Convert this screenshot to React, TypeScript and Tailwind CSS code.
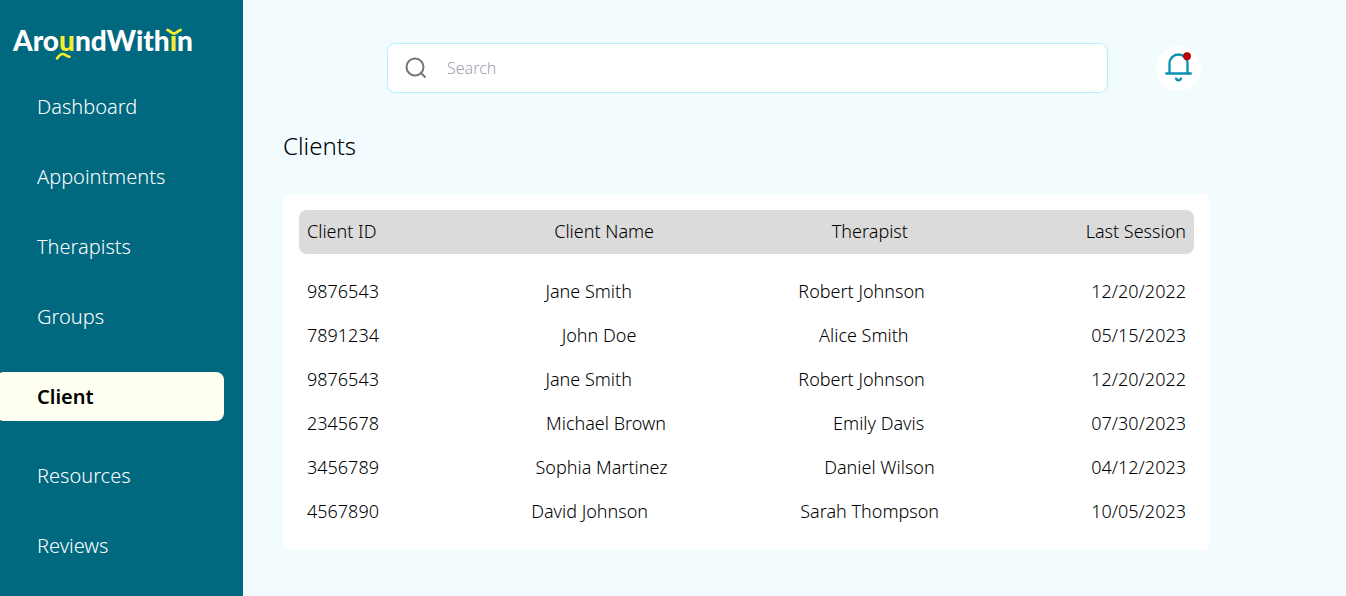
const navItems = ['Dashboard', 'Appointments', 'Therapists', 'Groups', 'Client', 'Resources', 'Reviews'];

const columns = ['Client ID', 'Client Name', 'Therapist', 'Last Session'];

const clients = [
  ['9876543', 'Jane Smith', 'Robert Johnson', '12/20/2022'],
  ['7891234', 'John Doe', 'Alice Smith', '05/15/2023'],
  ['9876543', 'Jane Smith', 'Robert Johnson', '12/20/2022'],
  ['2345678', 'Michael Brown', 'Emily Davis', '07/30/2023'],
  ['3456789', 'Sophia Martinez', 'Daniel Wilson', '04/12/2023'],
  ['4567890', 'David Johnson', 'Sarah Thompson', '10/05/2023'],
];

function Logo() {
  return (
    <a
      href="#home"
      aria-label="AroundWithin"
      className="ml-[13px] mt-[22px] flex h-9 font-['Lato',sans-serif] text-[28px] font-black leading-9 text-white"
    >
      <span>Aro</span>
      <span className="relative text-[#f5ee30]">
        u
        <svg className="absolute -left-1 top-[30px] h-2 w-4" viewBox="0 0 16 8" fill="none" aria-hidden="true">
          <path d="M2 6.500C3.500 4 6 2 8 2S11 4 14.500 4.800" stroke="currentColor" strokeWidth="2.600" strokeLinecap="round" />
        </svg>
      </span>
      <span>ndWith</span>
      <span className="relative text-[#f5ee30]">
        ı
        <svg className="absolute -left-1 top-[6px] h-2 w-4" viewBox="0 0 16 8" fill="none" aria-hidden="true">
          <path d="M1.500 2C4.500 3 6 5.500 8 5.500S11.500 3 14.500 2" stroke="currentColor" strokeWidth="2.800" strokeLinecap="round" />
        </svg>
      </span>
      <span>n</span>
    </a>
  );
}

function Sidebar() {
  return (
    <aside className="w-[243px] shrink-0 bg-[#00687f]">
      <Logo />
      <nav aria-label="Main" className="mt-[34px]">
        <ul className="flex flex-col gap-10 text-xl">
          {navItems.map((item) =>
            item === 'Client' ? (
              <li key={item} className="-ml-1 mr-[19px]">
                <a
                  href="#client"
                  aria-current="page"
                  className="block rounded-lg bg-[#fffff2] pl-[41px] font-semibold leading-[49px] text-black"
                >
                  {item}
                </a>
              </li>
            ) : (
              <li key={item}>
                <a href={`#${item.toLowerCase()}`} className="block pl-[37px] font-light leading-[30px] text-white">
                  {item}
                </a>
              </li>
            ),
          )}
        </ul>
      </nav>
    </aside>
  );
}

function SearchBar() {
  return (
    <div className="flex h-[50px] flex-1 items-center gap-5 rounded-lg border border-[#b2f1fc] bg-white pl-[17px] pr-4">
      <svg className="size-[22px] shrink-0" viewBox="0 0 22 22" fill="none" stroke="#757575" strokeWidth="2" aria-hidden="true">
        <circle cx="10" cy="10" r="8.500" />
        <path d="M16 16l4.500 4.500" />
      </svg>
      <input
        type="search"
        aria-label="Search"
        placeholder="Search"
        className="h-full min-w-0 flex-1 bg-transparent text-base font-light outline-none placeholder:text-[#9ca3af]"
      />
    </div>
  );
}

function NotificationButton() {
  return (
    <button type="button" aria-label="Notifications" className="flex size-[45px] items-center justify-center rounded-full bg-white">
      <svg className="h-8 w-7" viewBox="0 0 28 32" fill="none" stroke="#0891b2" strokeWidth="2.300" aria-hidden="true">
        <path d="M4.500 21V11.500a9 9 0 0 1 18 0V21" />
        <path d="M1.200 21.500h24.600" strokeLinecap="round" />
        <path d="M11 26.500c1 2.400 4 2.400 5 0" strokeLinecap="round" />
        <circle cx="22" cy="4.200" r="3.900" fill="#b80000" stroke="none" />
      </svg>
    </button>
  );
}

function ClientTable() {
  return (
    <section className="rounded-lg bg-white p-4">
      <table className="block text-lg leading-7">
        <thead className="block">
          <tr className="mb-4 flex justify-between rounded-lg bg-[#dbdbdb] px-2 pb-[9px] pt-[7px]">
            {columns.map((column) => (
              <th key={column} scope="col" className="font-light">
                {column}
              </th>
            ))}
          </tr>
        </thead>
        <tbody className="block">
          {clients.map((client, row) => (
            <tr key={row} className="flex justify-between px-2 pb-[9px] pt-[7px]">
              {client.map((value, cell) => (
                <td key={cell} className="font-light">
                  {value}
                </td>
              ))}
            </tr>
          ))}
        </tbody>
      </table>
    </section>
  );
}

export default function App() {
  return (
    <div className="flex min-h-screen bg-[#f2fcff] font-['Noto_Sans',sans-serif] text-black">
      <Sidebar />
      <main className="min-w-0 flex-1 pb-[46px] pl-10 pr-[136px] pt-[43px]">
        <header className="flex items-center gap-12 pl-[104px] pr-[9px]">
          <SearchBar />
          <NotificationButton />
        </header>
        <h1 className="mb-[33px] mt-[38px] text-2xl font-light leading-[30px]">Clients</h1>
        <ClientTable />
      </main>
    </div>
  );
}
